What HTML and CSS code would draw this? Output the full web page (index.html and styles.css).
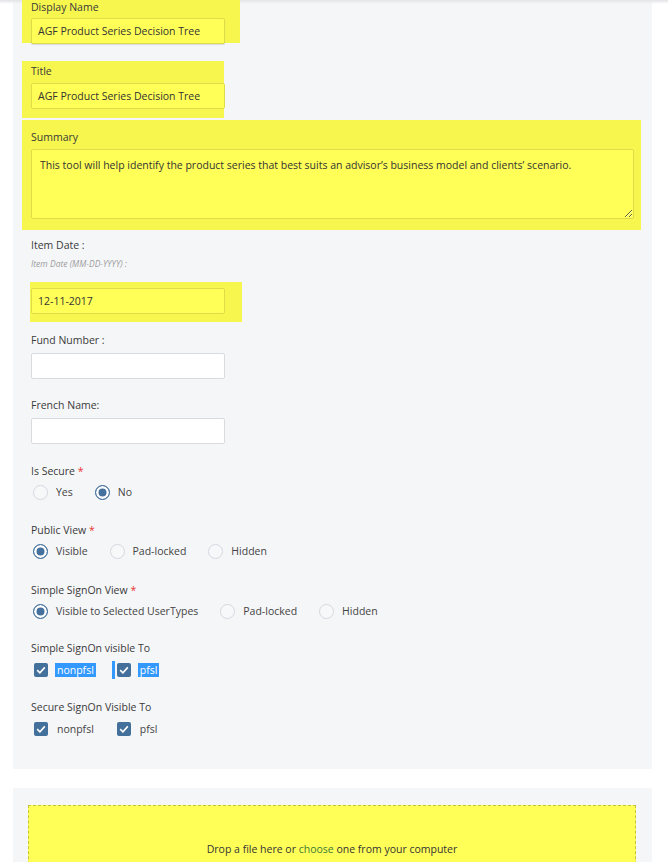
FILE: index.html
```html
<!DOCTYPE html>
<html>
<head>
<meta charset="utf-8">
<link rel="stylesheet" href="styles.css">
</head>
<body>
<div class="panel form-panel">
  <div class="field hl hl-name">
    <label class="lbl lbl-first">Display Name</label>
    <div class="input input-hl">AGF Product Series Decision Tree</div>
  </div>
  <div class="field hl hl-title">
    <label class="lbl">Title</label>
    <div class="input input-hl">AGF Product Series Decision Tree</div>
  </div>
  <div class="field hl hl-summary">
    <label class="lbl">Summary</label>
    <textarea class="textarea" readonly>This tool will help identify the product series that best suits an advisor’s business model and clients’ scenario.</textarea>
  </div>
  <div class="field f-date">
    <label class="lbl">Item Date :</label>
    <div class="hint">Item Date (MM-DD-YYYY) :</div>
  </div>
  <div class="hl hl-date">
    <div class="input input-hl">12-11-2017</div>
  </div>
  <div class="field f-fund">
    <label class="lbl">Fund Number :</label>
    <div class="input"></div>
  </div>
  <div class="field f-std">
    <label class="lbl">French Name:</label>
    <div class="input"></div>
  </div>
  <div class="field f-secure">
    <label class="lbl">Is Secure <span class="req">*</span></label>
    <div class="opt-row">
      <span class="opt"><span class="radio"></span>Yes</span>
      <span class="opt"><span class="radio on"></span>No</span>
    </div>
  </div>
  <div class="field f-public">
    <label class="lbl">Public View <span class="req">*</span></label>
    <div class="opt-row">
      <span class="opt"><span class="radio on"></span>Visible</span>
      <span class="opt"><span class="radio"></span>Pad-locked</span>
      <span class="opt"><span class="radio"></span>Hidden</span>
    </div>
  </div>
  <div class="field f-sso">
    <label class="lbl">Simple SignOn View <span class="req">*</span></label>
    <div class="opt-row">
      <span class="opt"><span class="radio on"></span>Visible to Selected UserTypes</span>
      <span class="opt"><span class="radio"></span>Pad-locked</span>
      <span class="opt"><span class="radio"></span>Hidden</span>
    </div>
  </div>
  <div class="field f-ssovis">
    <label class="lbl">Simple SignOn visible To</label>
    <div class="cb-row">
      <span class="cb-item"><span class="cb"><svg viewBox="0 0 14 14" width="14" height="14"><path d="M3.2 7.2 L5.9 9.8 L10.8 4.4" fill="none" stroke="#fff" stroke-width="1.6"/></svg></span><span class="cb-txt sel">nonpfsl</span></span>
      <span class="caret sel-bar"></span>
      <span class="cb-item"><span class="cb"><svg viewBox="0 0 14 14" width="14" height="14"><path d="M3.2 7.2 L5.9 9.8 L10.8 4.4" fill="none" stroke="#fff" stroke-width="1.6"/></svg></span><span class="cb-txt sel">pfsl</span></span>
    </div>
  </div>
  <div class="field f-secvis">
    <label class="lbl">Secure SignOn Visible To</label>
    <div class="cb-row">
      <span class="cb-item"><span class="cb"><svg viewBox="0 0 14 14" width="14" height="14"><path d="M3.2 7.2 L5.9 9.8 L10.8 4.4" fill="none" stroke="#fff" stroke-width="1.6"/></svg></span><span class="cb-txt">nonpfsl</span></span>
      <span class="caret"></span>
      <span class="cb-item"><span class="cb"><svg viewBox="0 0 14 14" width="14" height="14"><path d="M3.2 7.2 L5.9 9.8 L10.8 4.4" fill="none" stroke="#fff" stroke-width="1.6"/></svg></span><span class="cb-txt">pfsl</span></span>
    </div>
  </div>
</div>
<div class="panel drop-panel">
  <div class="dropzone">Drop a file here or <span class="choose">choose</span> one from your computer</div>
</div>
</body>
</html>
```
FILE: styles.css
```css
html, body {
  margin: 0;
  padding: 0;
  background: #fff;
}
body {
  font-family: "Open Sans", "Noto Sans", sans-serif;
  font-size: 10.5px;
  color: #3a3a3a;
  background: linear-gradient(to bottom, #e2e3e6 0, #ffffff 4px);
  height: 862px;
  overflow: hidden;
}
.panel {
  margin-left: 13px;
  width: 639px;
  box-sizing: border-box;
  background: #f5f6f8;
}
.form-panel {
  padding: 0 11px 31px 9px;
  background: linear-gradient(to bottom, #e3e4e7 0, #f5f6f8 4px);
}
.field {
  padding-left: 9px;
}
.lbl {
  display: block;
  line-height: 16px;
  white-space: nowrap;
}
.lbl-first {
  line-height: 13px;
  padding-top: 1px;
}
.req {
  color: #e8332f;
}
.input {
  box-sizing: border-box;
  width: 194px;
  height: 26px;
  margin-top: 5px;
  border: 1px solid #d8dbe0;
  border-radius: 2px;
  background: #fff;
  padding-left: 6px;
  line-height: 24px;
  color: #333;
  white-space: nowrap;
}
.hl {
  background: #f6f64e;
}
.input-hl {
  background: #ffff57;
  border-color: #dddd4a;
}
.hl-name {
  width: 218px;
  box-sizing: border-box;
  height: 43px;
}
.hl-name .input {
  margin-top: 4px;
  box-shadow: 0 1px 1px rgba(0,0,0,0.12);
}
.hl-title {
  width: 202px;
  box-sizing: border-box;
  margin-top: 18px;
  padding-top: 3px;
  padding-bottom: 9px;
}
.hl-title .lbl {
  line-height: 14px;
}
.hl-summary {
  width: 619px;
  box-sizing: border-box;
  margin-top: 2px;
  padding-top: 9px;
  padding-bottom: 11px;
}
.textarea {
  display: block;
  box-sizing: border-box;
  width: 603px;
  height: 70px;
  margin: 4px 0 0 0;
  border: 1px solid #dcdc48;
  border-radius: 2px;
  background: #ffff57;
  font-family: "Open Sans", "Noto Sans", sans-serif;
  font-size: 10.5px;
  color: #333;
  padding: 8px 8px;
  line-height: 15px;
  outline: none;
}
.f-date {
  margin-top: 7px;
}
.hint {
  margin-top: 5px;
  font-size: 8.5px;
  font-style: italic;
  color: #9c9c9c;
  line-height: 12px;
}
.hl-date {
  margin: 12px 0 0 8px;
  width: 212px;
  box-sizing: border-box;
  padding: 6px 0 8px 1px;
}
.hl-date .input {
  margin-top: 0;
}
.f-fund {
  margin-top: 10px;
}
.f-std {
  margin-top: 18px;
}
.f-secure {
  margin-top: 19px;
}
.f-public {
  margin-top: 22px;
}
.f-sso {
  margin-top: 23px;
}
.f-ssovis {
  margin-top: 21px;
}
.f-secvis {
  margin-top: 20px;
}
.opt-row {
  display: flex;
  align-items: center;
  height: 16px;
  margin-top: 5px;
  padding-left: 2px;
  color: #444;
}
.opt {
  display: flex;
  align-items: center;
  margin-right: 22px;
  white-space: nowrap;
}
.radio {
  box-sizing: border-box;
  width: 15px;
  height: 15px;
  border: 1.5px solid #d3d9e0;
  border-radius: 50%;
  background: #f7f8fa;
  margin-right: 8px;
}
.radio.on {
  border-color: #44719e;
  background: #44719e;
  box-shadow: inset 0 0 0 2.5px #fff;
}
.cb-row {
  display: flex;
  align-items: center;
  height: 18px;
  margin-top: 5px;
  padding-left: 3px;
  color: #444;
}
.cb-item {
  display: flex;
  align-items: center;
}
.cb {
  display: block;
  width: 14px;
  height: 14px;
  border-radius: 2px;
  background: #44709c;
  margin-right: 7px;
}
.cb svg {
  display: block;
}
.cb-txt {
  line-height: 14px;
  padding: 0 2px;
}
.cb-txt.sel {
  background: #3399ff;
  color: #fff;
}
.caret {
  display: block;
  width: 3px;
  height: 18px;
  margin: 0 2px 0 16px;
}
.caret.sel-bar {
  background: #3399ff;
}
.drop-panel {
  margin-top: 19px;
  padding: 17px 16px 0 15px;
  height: 80px;
}
.dropzone {
  box-sizing: border-box;
  height: 80px;
  border: 1.5px dashed #c4c43c;
  background: #ffff57;
  text-align: center;
  padding-top: 35px;
  color: #333;
  font-size: 10.5px;
  line-height: 16px;
}
.choose {
  color: #3d7a34;
}
```
